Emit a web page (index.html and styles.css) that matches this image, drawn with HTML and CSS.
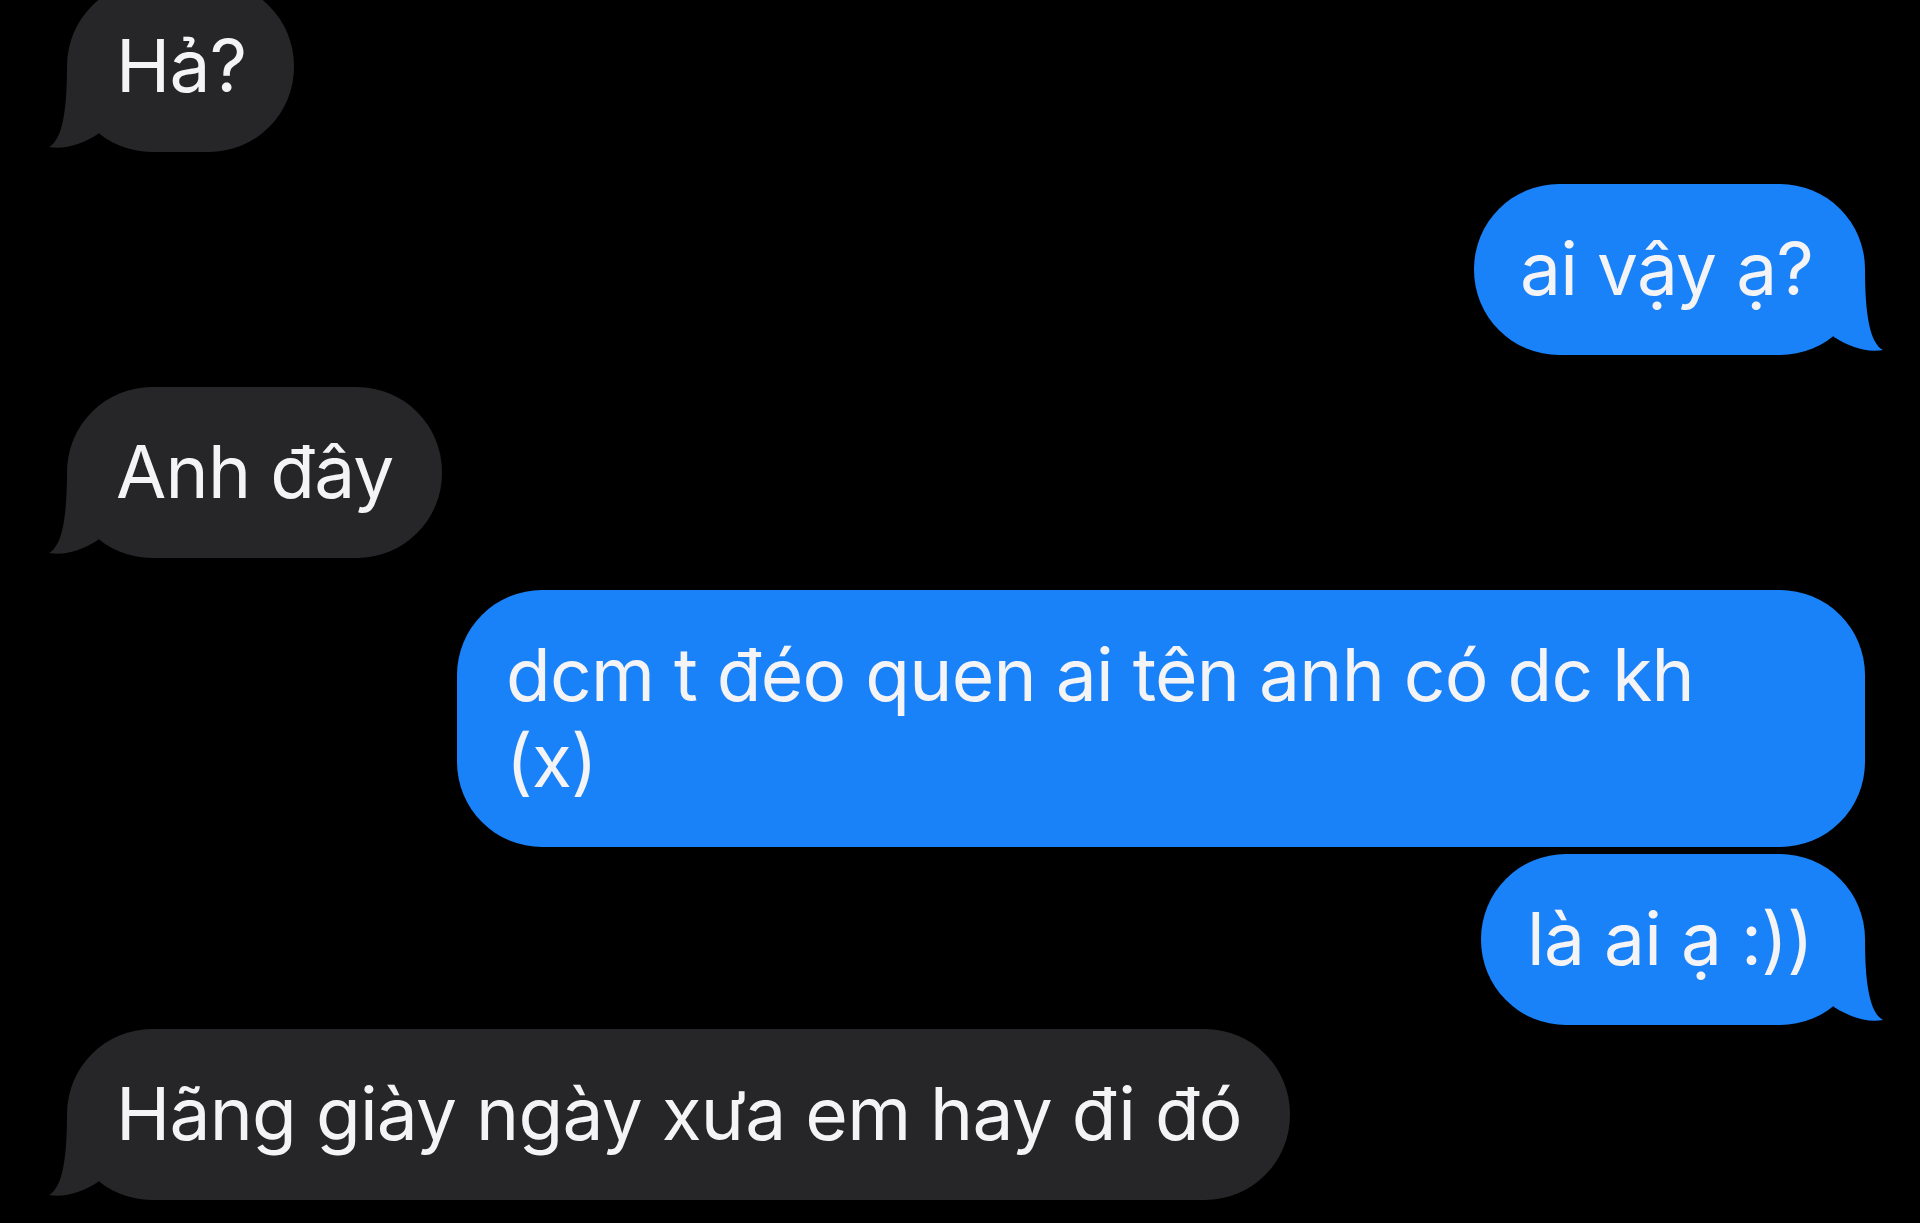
FILE: index.html
```html
<!DOCTYPE html>
<html lang="vi">
<head>
<meta charset="utf-8">
<title>Tin nhắn</title>
<link rel="stylesheet" href="styles.css">
</head>
<body>
<main class="thread">
  <div class="bubble in first">Hả?<svg class="tail" viewBox="0 0 100 100"><path d="M20 14 C20 60 15 88 2 95 C18 98 35 92 51 82 L90 30 Z"/></svg></div>
  <div class="bubble out gap">ai vậy ạ?<svg class="tail" viewBox="0 0 100 100"><path d="M20 14 C20 60 15 88 2 95 C18 98 35 92 51 82 L90 30 Z"/></svg></div>
  <div class="bubble in gap">Anh đây<svg class="tail" viewBox="0 0 100 100"><path d="M20 14 C20 60 15 88 2 95 C18 98 35 92 51 82 L90 30 Z"/></svg></div>
  <div class="bubble out gap wide">dcm t đéo quen ai tên anh có dc kh<br>(x)</div>
  <div class="bubble out tight">là ai ạ :))<svg class="tail" viewBox="0 0 100 100"><path d="M20 14 C20 60 15 88 2 95 C18 98 35 92 51 82 L90 30 Z"/></svg></div>
  <div class="bubble in tighter">Hãng giày ngày xưa em hay đi đó<svg class="tail" viewBox="0 0 100 100"><path d="M20 14 C20 60 15 88 2 95 C18 98 35 92 51 82 L90 30 Z"/></svg></div>
</main>
</body>
</html>
```
FILE: styles.css
```css
html {
  background: #000;
}
body {
  margin: 0;
  height: 1223px;
  overflow: hidden;
}
.thread {
  position: relative;
  z-index: 0;
  display: flex;
  flex-direction: column;
  padding: 0 55px 0 67px;
  font-family: Inter, "Noto Sans", sans-serif;
  font-size: 73px;
  line-height: 86px;
  letter-spacing: -0.75px;
  color: #f4f4f7;
}
.bubble {
  position: relative;
  box-sizing: border-box;
  padding: 42px 52px 43px 46px;
  border-radius: 85px;
  white-space: nowrap;
}
.in {
  align-self: flex-start;
  padding-left: 49px;
  padding-right: 48px;
  background: #262628;
  fill: #262628;
}
.out {
  align-self: flex-end;
  background: #1a82f8;
  fill: #1a82f8;
}
.first { margin-top: -19px; }
.gap { margin-top: 32px; }
.tight { margin-top: 7px; }
.tighter { margin-top: 4px; }
.wide {
  width: 1408px;
  padding-left: 49px;
}
.tail {
  position: absolute;
  bottom: 0;
  width: 100px;
  height: 100px;
  z-index: -1;
}
.in .tail { left: -20px; }
.out .tail { right: -20px; transform: scaleX(-1); }
```
